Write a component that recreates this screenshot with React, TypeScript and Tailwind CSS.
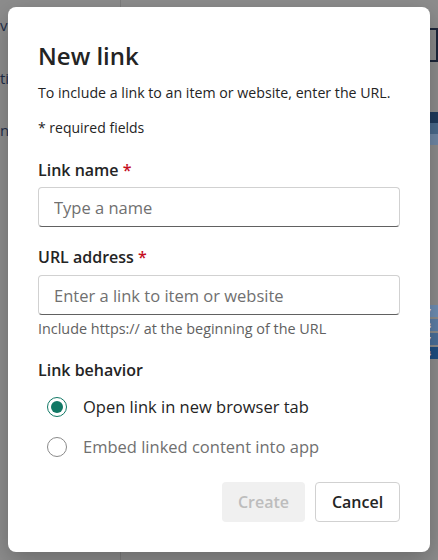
import { useState } from 'react';

const font = { fontFamily: '"Segoe UI", "Open Sans", "Noto Sans", sans-serif' };

function Radio({ checked, label, onClick }: { checked: boolean; label: string; onClick: () => void }) {
  return (
    <label onClick={onClick} className="flex h-10 cursor-pointer items-center pl-[9px]">
      <span
        className={
          checked
            ? 'flex h-5 w-5 items-center justify-center rounded-full border border-[#117865]'
            : 'flex h-5 w-5 items-center justify-center rounded-full border border-[#8a8a8a]'
        }
      >
        {checked && <span className="h-3 w-3 rounded-full bg-[#117865]" />}
      </span>
      <span className={checked ? 'ml-[16px] text-[16.5px] text-[#242424]' : 'ml-[16px] text-[16.5px] text-[#707070]'}>
        {label}
      </span>
    </label>
  );
}

export default function App() {
  const [behavior, setBehavior] = useState<'tab' | 'embed'>('tab');

  return (
    <div className="relative h-[560px] w-[438px] overflow-hidden bg-[#8d8d8d]" style={font}>
      {/* app behind the overlay */}
      <div className="flex h-full">
        <div className="flex w-[121px] flex-col gap-[30px] border-r border-[#7e7e7e] pt-[14px] text-[15px] text-[#1f2d4a]">
          <span>v</span>
          <span>ti</span>
          <span>nc</span>
        </div>
        <div className="flex-1" />
        <div className="flex w-[24px] flex-col">
          <div className="mt-[28px] h-[34px] border-2 border-[#1c2539] bg-[#8a8a8a]" />
          <div className="mt-[50px] h-[11px] bg-[#1f3a5c]" />
          <div className="h-[11px] bg-[#4a6a8c]" />
          <div className="h-[11px] bg-[#6f88a6]" />
          <div className="mt-[160px] flex flex-col gap-[2px] text-[8px] text-white">
            <span className="bg-[#6f8fb5] pl-[8px]">$7</span>
            <span className="bg-[#5c7fa8] pl-[8px]">$8</span>
            <span className="bg-[#4a6f9a] pl-[8px]">$7</span>
            <span className="bg-[#1f4e82] pl-[8px]">$4</span>
          </div>
        </div>
      </div>

      {/* dialog */}
      <div className="absolute left-[8px] top-[7px] flex w-[422px] flex-col rounded-[8px] bg-white px-[30px] pb-[30px] pt-[33px] shadow-[0_8px_24px_rgba(0,0,0,0.25)]">
        <h1 className="text-[24px] font-semibold leading-[32px] text-[#242424]">New link</h1>
        <p className="mt-[11px] text-[14.2px] leading-[20px] text-[#242424]">
          To include a link to an item or website, enter the URL.
        </p>
        <p className="mt-[15px] text-[14px] leading-[20px] text-[#242424]">* required fields</p>

        <label className="mt-[21px] text-[16px] font-semibold leading-[22px] text-[#242424]">
          Link name <span className="text-[#c50f1f]">*</span>
        </label>
        <input
          type="text"
          placeholder="Type a name"
          className="mt-[6px] h-10 w-full rounded-[4px] border border-[#d1d1d1] border-b-[#616161] px-[15px] text-[16.5px] text-[#242424] outline-none placeholder:text-[#707070]"
        />

        <label className="mt-[19px] text-[16px] font-semibold leading-[22px] text-[#242424]">
          URL address <span className="text-[#c50f1f]">*</span>
        </label>
        <input
          type="text"
          placeholder="Enter a link to item or website"
          className="mt-[7px] h-10 w-full rounded-[4px] border border-[#d1d1d1] border-b-[#616161] px-[15px] text-[16.5px] text-[#242424] outline-none placeholder:text-[#707070]"
        />
        <p className="mt-[4px] text-[14.4px] leading-[20px] text-[#616161]">Include https:// at the beginning of the URL</p>

        <p className="mt-[20px] text-[16px] font-semibold leading-[22px] text-[#242424]">Link behavior</p>
        <div className="mt-[6px] flex flex-col">
          <Radio checked={behavior === 'tab'} label="Open link in new browser tab" onClick={() => setBehavior('tab')} />
          <Radio checked={behavior === 'embed'} label="Embed linked content into app" onClick={() => setBehavior('embed')} />
        </div>

        <div className="mt-[15px] flex justify-end gap-[10px]">
          <button
            type="button"
            disabled
            className="h-10 w-[83px] rounded-[4px] bg-[#f0f0f0] text-[16px] font-semibold text-[#bdbdbd]"
          >
            Create
          </button>
          <button
            type="button"
            className="h-10 w-[85px] rounded-[4px] border border-[#d1d1d1] bg-white text-[16px] font-semibold text-[#242424]"
          >
            Cancel
          </button>
        </div>
      </div>
    </div>
  );
}
